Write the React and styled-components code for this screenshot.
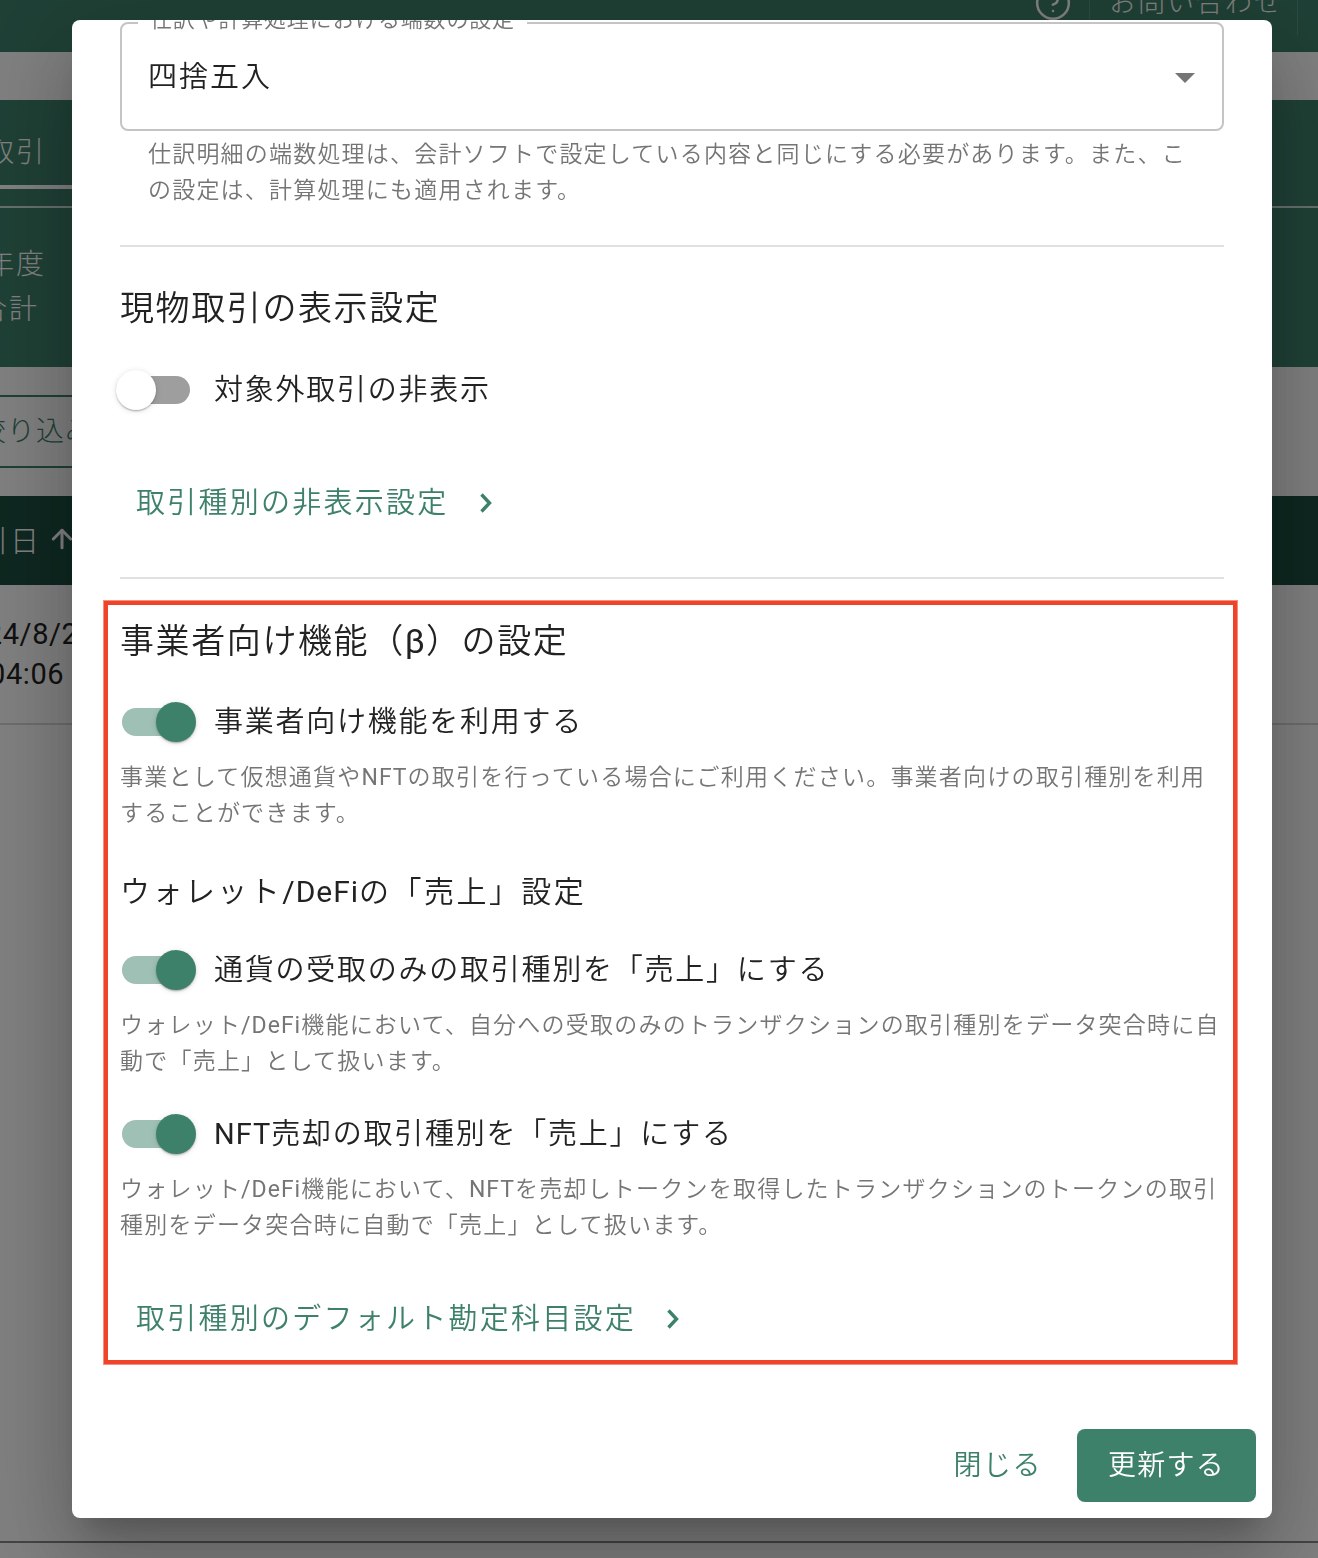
import React from "react";
import styled, { createGlobalStyle } from "styled-components";
import { ArrowUp, CircleHelp } from "lucide-react";

const GlobalStyle = createGlobalStyle`
  html, body {
    margin: 0;
    padding: 0;
    background: #fff;
  }
  * {
    box-sizing: border-box;
  }
  body {
    font-family: Roboto, "Noto Sans CJK JP", sans-serif;
    color: #222;
  }
`;

const GREEN = "#3e816b";

export default function App() {
  return (
    <>
      <GlobalStyle />
      <Page>
        <Header>
          <HelpIcon size={38} strokeWidth={1.6} />
          <HeaderDivider />
          <HeaderLink>お問い合わせ</HeaderLink>
          <HeaderDivider />
        </Header>
        <Band />
        <Panel>
          <TabLabel>取引</TabLabel>
          <TabIndicator />
          <PanelLine />
          <YearLabel>年度</YearLabel>
          <TotalLabel>合計</TotalLabel>
        </Panel>
        <FilterArea>
          <FilterButton>絞り込み</FilterButton>
        </FilterArea>
        <TableHead>
          取引日
          <ArrowUp size={30} strokeWidth={2.4} />
        </TableHead>
        <TableRow>
          <DateText>2024/8/2</DateText>
          <TimeText>04:06</TimeText>
        </TableRow>
        <PageRest />
        <PageFoot />
      </Page>

      <Overlay>
        <Modal>
          <Field>
            <Legend>仕訳や計算処理における端数の設定</Legend>
            <FieldValue>四捨五入</FieldValue>
            <Caret />
          </Field>
          <FieldHelp>
            仕訳明細の端数処理は、会計ソフトで設定している内容と同じにする必要があります。また、この設定は、計算処理にも適用されます。
          </FieldHelp>
          <Divider $top={36} />

          <Heading $top={37}>現物取引の表示設定</Heading>
          <Toggle $top={36} label="対象外取引の非表示" />
          <LinkRow $top={67}>
            取引種別の非表示設定
            <Chevron />
          </LinkRow>
          <Divider $top={50} />

          <Highlight>
            <Heading $top={0}>
              事業者向け機能（<Latin>β</Latin>）の設定
            </Heading>
            <Toggle $top={35} on label="事業者向け機能を利用する" />
            <Note>
              事業として仮想通貨や<Latin>NFT</Latin>の取引を行っている場合にご利用ください。事業者向けの取引種別を利用することができます。
            </Note>
            <SubHeading>
              ウォレット<Latin>/DeFi</Latin>の「売上」設定
            </SubHeading>
            <Toggle $top={34} on label="通貨の受取のみの取引種別を「売上」にする" />
            <Note>
              ウォレット<Latin>/DeFi</Latin>機能において、自分への受取のみのトランザクションの取引種別をデータ突合時に自動で「売上」として扱います。
            </Note>
            <Toggle
              $top={32}
              on
              label={
                <>
                  <Latin>NFT</Latin>売却の取引種別を「売上」にする
                </>
              }
            />
            <Note>
              ウォレット<Latin>/DeFi</Latin>機能において、<Latin>NFT</Latin>を売却しトークンを取得したトランザクションのトークンの取引種別をデータ突合時に自動で「売上」として扱います。
            </Note>
            <LinkRow $top={51}>
              取引種別のデフォルト勘定科目設定
              <Chevron />
            </LinkRow>
          </Highlight>

          <Footer>
            <CloseButton>閉じる</CloseButton>
            <SubmitButton>更新する</SubmitButton>
          </Footer>
        </Modal>
      </Overlay>
    </>
  );
}

function Toggle({ on, label, $top }) {
  return (
    <ToggleRow $top={$top}>
      <Track $on={on}>
        <Thumb $on={on} />
      </Track>
      <ToggleLabel>{label}</ToggleLabel>
    </ToggleRow>
  );
}

function Chevron() {
  return (
    <ChevronIcon width="14" height="22" viewBox="0 0 14 22">
      <polyline points="2.5,2.5 10.5,11 2.5,19.5" fill="none" stroke={GREEN} strokeWidth="3.4" />
    </ChevronIcon>
  );
}

// latin runs sit at regular weight next to the lighter japanese text
const Latin = styled.span`
  font-weight: 400;
  letter-spacing: 1px;
`;

// page behind the dialog
const Page = styled.div`
  width: 1318px;
  height: 1558px;
  overflow: hidden;
  display: flex;
  flex-direction: column;
  background: #fff;
`;

const Header = styled.header`
  height: 52px;
  flex: none;
  background: ${GREEN};
  color: #fff;
  display: flex;
  justify-content: flex-end;
  align-items: flex-start;
  padding-right: 20px;
`;

const HelpIcon = styled(CircleHelp)`
  margin-top: -16px;
  margin-right: 17px;
`;

const HeaderDivider = styled.div`
  width: 1px;
  height: 35px;
  background: rgba(255, 255, 255, 0.15);
`;

const HeaderLink = styled.div`
  font-size: 27px;
  letter-spacing: 2px;
  line-height: 36px;
  margin: -15px 14px 0 19px;
  white-space: nowrap;
  font-weight: 300;
`;

const Band = styled.div`
  height: 48px;
  flex: none;
`;

const Panel = styled.section`
  height: 267px;
  flex: none;
  background: ${GREEN};
  color: #fff;
  display: flex;
  flex-direction: column;
  align-items: flex-start;
  font-size: 28px;
  font-weight: 300;
  letter-spacing: 2px;
  white-space: nowrap;
`;

const TabLabel = styled.div`
  margin: 33px 0 0 -14px;
  line-height: 40px;
`;

const TabIndicator = styled.div`
  width: 240px;
  height: 4px;
  margin-top: 12px;
  background: #fff;
`;

const PanelLine = styled.div`
  width: 100%;
  height: 2px;
  margin-top: 17px;
  background: rgba(255, 255, 255, 0.75);
`;

const YearLabel = styled.div`
  margin: 35px 0 0 -14px;
  line-height: 44px;
`;

const TotalLabel = styled.div`
  margin: 1px 0 0 -21px;
  line-height: 44px;
`;

const FilterArea = styled.div`
  height: 129px;
  flex: none;
  padding-top: 28px;
`;

const FilterButton = styled.div`
  width: 260px;
  height: 73px;
  margin-left: -36px;
  padding-left: 12px;
  padding-bottom: 5px;
  display: flex;
  align-items: center;
  border: 2px solid ${GREEN};
  border-radius: 4px;
  color: ${GREEN};
  font-size: 28px;
  font-weight: 300;
  letter-spacing: 1px;
  white-space: nowrap;
`;

const TableHead = styled.div`
  height: 89px;
  flex: none;
  background: #1c4f40;
  color: #fff;
  display: flex;
  align-items: center;
  gap: 6px;
  margin-left: -52px;
  padding-bottom: 4px;
  font-size: 29px;
  font-weight: 300;
  letter-spacing: 2px;
  white-space: nowrap;
`;

const TableRow = styled.div`
  height: 140px;
  flex: none;
  padding-top: 29px;
  border-bottom: 2px solid #d8d8d8;
  font-size: 29px;
  line-height: 40px;
  color: #222;
  white-space: nowrap;
  letter-spacing: 0.6px;
`;

const DateText = styled.div`
  margin-left: -48px;
`;

const TimeText = styled.div`
  margin-left: -11px;
`;

const PageRest = styled.div`
  height: 816px;
  flex: none;
`;

const PageFoot = styled.div`
  flex: 1;
  border-top: 2px solid #888;
`;

// dialog
const Overlay = styled.div`
  position: fixed;
  top: 0;
  left: 0;
  width: 1318px;
  height: 1558px;
  background: rgba(0, 0, 0, 0.5);
  display: flex;
  align-items: flex-start;
  padding: 20px 0 0 72px;
`;

const Modal = styled.div`
  width: 1200px;
  height: 1498px;
  padding: 2px 48px 0;
  background: #fff;
  border-radius: 8px;
  overflow: hidden;
  box-shadow: 0 22px 30px -14px rgba(0, 0, 0, 0.2), 0 48px 76px 6px rgba(0, 0, 0, 0.14),
    0 18px 92px 16px rgba(0, 0, 0, 0.12);
  display: flex;
  flex-direction: column;
  flex: none;
`;

const Field = styled.div`
  position: relative;
  height: 109px;
  flex: none;
  border: 2px solid #c4c4c4;
  border-radius: 8px;
  padding: 0 26px;
  display: flex;
  align-items: center;
  justify-content: space-between;
`;

const Legend = styled.span`
  position: absolute;
  top: -16px;
  left: 16px;
  padding: 0 12px;
  background: #fff;
  color: #757575;
  font-size: 22px;
  line-height: 24px;
  letter-spacing: 0.8px;
  font-weight: 350;
  white-space: nowrap;
`;

const FieldValue = styled.span`
  font-size: 29px;
  line-height: 40px;
  letter-spacing: 2px;
  font-weight: 350;
  color: #222;
`;

const Caret = styled.span`
  width: 0;
  height: 0;
  margin: 2px 1px 0 0;
  border-left: 10px solid transparent;
  border-right: 10px solid transparent;
  border-top: 10px solid #757575;
`;

const FieldHelp = styled.p`
  margin: 6px 0 0;
  padding: 0 28px;
  font-size: 23px;
  line-height: 36px;
  letter-spacing: 1.2px;
  color: #757575;
  font-weight: 350;
`;

const Divider = styled.div`
  height: 2px;
  flex: none;
  margin-top: ${(p) => p.$top}px;
  background: #e0e0e0;
`;

const Heading = styled.h2`
  margin: ${(p) => p.$top}px 0 0;
  font-size: 34px;
  line-height: 48px;
  font-weight: 350;
  letter-spacing: 1.6px;
  color: #222;
  flex: none;
`;

const SubHeading = styled.h3`
  margin: 38px 0 0;
  font-size: 30px;
  line-height: 44px;
  font-weight: 350;
  letter-spacing: 2.45px;
  color: #222;
`;

const ToggleRow = styled.div`
  margin-top: ${(p) => p.$top}px;
  height: 44px;
  flex: none;
  display: flex;
  align-items: center;
  gap: 24px;
`;

const Track = styled.div`
  position: relative;
  width: 68px;
  height: 28px;
  margin-left: 2px;
  border-radius: 14px;
  background: ${(p) => (p.$on ? "#9fc0b5" : "#9e9e9e")};
`;

const Thumb = styled.div`
  position: absolute;
  top: -6px;
  left: ${(p) => (p.$on ? "34px" : "-6px")};
  width: 40px;
  height: 40px;
  border-radius: 50%;
  background: ${(p) => (p.$on ? GREEN : "#fff")};
  box-shadow: 0 2px 2px -1px rgba(0, 0, 0, 0.2), 0 1px 2px 0 rgba(0, 0, 0, 0.14),
    0 1px 6px 0 rgba(0, 0, 0, 0.12);
`;

const ToggleLabel = styled.span`
  font-size: 29px;
  line-height: 44px;
  letter-spacing: 1.75px;
  font-weight: 350;
  color: #222;
  white-space: nowrap;
`;

const LinkRow = styled.div`
  margin-top: ${(p) => p.$top}px;
  height: 48px;
  flex: none;
  padding-left: 16px;
  display: flex;
  align-items: center;
  gap: 30px;
  font-size: 29px;
  line-height: 48px;
  letter-spacing: 2.25px;
  font-weight: 350;
  color: ${GREEN};
`;

const ChevronIcon = styled.svg`
  display: block;
  flex: none;
`;

const Highlight = styled.section`
  margin: 22px -13px 0 -16px;
  padding: 12px 9px 17px 12px;
  border: 4px solid #f0442a;
  box-shadow: 0 0 0 1px rgba(240, 68, 42, 0.6);
  flex: none;
`;

const Note = styled.p`
  margin: 16px 0 0;
  font-size: 23px;
  line-height: 36px;
  letter-spacing: 1.22px;
  color: #757575;
  font-weight: 350;
`;

const Footer = styled.footer`
  margin: 65px -32px 0 0;
  display: flex;
  justify-content: flex-end;
  align-items: center;
  gap: 16px;
  flex: none;
`;

const CloseButton = styled.button`
  height: 73px;
  padding: 0 23px 6px;
  border: none;
  background: none;
  font: inherit;
  font-size: 28px;
  font-weight: 350;
  letter-spacing: 1.5px;
  color: ${GREEN};
  margin-right: -4px;
`;

const SubmitButton = styled.button`
  width: 179px;
  height: 73px;
  padding: 0 0 6px;
  border: none;
  border-radius: 8px;
  background: ${GREEN};
  font: inherit;
  font-size: 28px;
  font-weight: 350;
  letter-spacing: 1.2px;
  color: #fff;
`;
